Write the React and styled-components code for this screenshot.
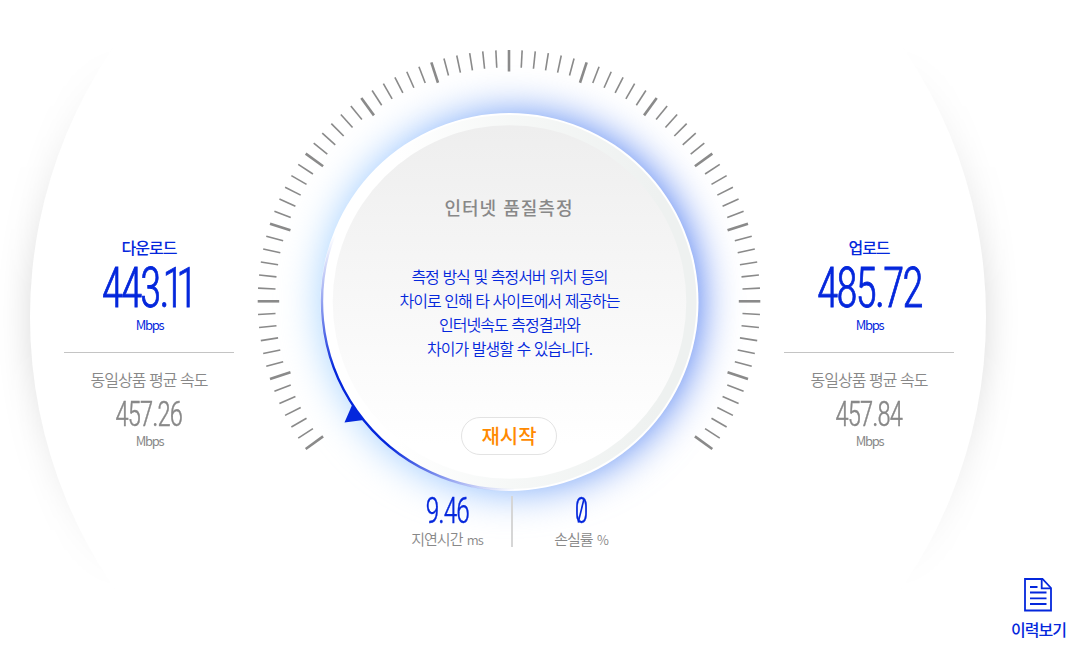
import React from 'react';
import styled, { createGlobalStyle } from 'styled-components';

const BLUE = '#0427dc';
const GRAY = '#888';

const Global = createGlobalStyle`
  * { box-sizing: border-box; }
  body {
    margin: 0;
    background: #fff;
    font-family: "Noto Sans CJK KR", sans-serif;
    letter-spacing: -1px;
    word-spacing: 1px;
  }
`;

const Page = styled.div`
  position: relative;
  width: 1084px;
  height: 657px;
  overflow: hidden;
  display: flex;
`;

const Halo = styled.div`
  position: absolute;
  inset: 0;
  overflow: hidden;
  mask-image: linear-gradient(transparent 45px, #000 290px, #000 350px, transparent 590px);

  &::before {
    content: '';
    position: absolute;
    left: 30px;
    top: -161px;
    width: 956px;
    height: 956px;
    border-radius: 50%;
    background: #fff;
    box-shadow: 0 0 34px rgba(0, 0, 0, 0.15);
  }
`;

const Gauge = styled.svg`
  position: absolute;
  inset: 0;
`;

const Board = styled.main`
  position: relative;
  display: grid;
  grid-template-columns: 170px 550px 170px;
  margin-left: 64px;
`;

const SpeedPanel = styled.section`
  display: flex;
  flex-direction: column;
  align-items: center;
  padding-top: 235px;
`;

const Label = styled.div`
  font-size: 16px;
  line-height: 24px;
  font-weight: ${(p) => (p.$strong ? 500 : 350)};
  color: ${(p) => (p.$strong ? BLUE : GRAY)};
`;

const Unit = styled.div`
  padding-left: 1px;
  font-size: 13px;
  line-height: 18px;
  font-weight: 400;
  letter-spacing: -1.3px;
  color: ${(p) => p.$color};
`;

const Figure = styled.div`
  height: ${(p) => p.$size}px;
  margin-top: ${(p) => p.$offset || 0}px;
  line-height: ${(p) => p.$size}px;
  font-family: Roboto, sans-serif;
  font-stretch: 75%;
  font-size: ${(p) => p.$size}px;
  font-weight: 300;
  -webkit-text-stroke: ${(p) => p.$stroke}px currentColor;
  letter-spacing: -0.05em;
  color: ${(p) => p.$color};
  transform: scaleX(0.8);
  white-space: nowrap;
`;

const One = styled.span`
  margin-left: -0.12em;
`;

const SlashedZero = styled.span`
  position: relative;

  &::after {
    content: '';
    position: absolute;
    left: 42%;
    top: 22%;
    width: 1.5px;
    height: 58%;
    background: currentColor;
    transform: rotate(17deg);
  }
`;

const SpeedBlock = styled.div`
  display: flex;
  flex-direction: column;
  align-items: center;
  height: ${(p) => p.$height}px;
  width: 100%;
`;

const Rule = styled.hr`
  width: 100%;
  height: 1px;
  margin: 0 0 14px;
  border: 0;
  background: #c4c4c4;
`;

const Center = styled.section`
  display: flex;
  flex-direction: column;
  align-items: center;
  padding-top: 194px;
`;

const Title = styled.h1`
  margin: 0 0 44px;
  font-size: 18px;
  line-height: 26px;
  font-weight: 500;
  letter-spacing: 1px;
  color: ${GRAY};
`;

const Notice = styled.p`
  margin: 0 0 57px;
  padding-left: 1px;
  font-size: 16px;
  line-height: 24px;
  font-weight: 350;
  text-align: center;
  color: ${BLUE};
`;

const Restart = styled.button`
  width: 96px;
  height: 38px;
  padding: 0;
  border: 1px solid #e3e3e3;
  border-radius: 19px;
  background: #fff;
  font: 500 20px/34px "Noto Sans CJK KR", sans-serif;
  letter-spacing: 0;
  color: #ff8a00;
`;

const Metrics = styled.div`
  display: flex;
  height: 51px;
  margin: 41px 0 0 14px;
`;

const Metric = styled.div`
  display: flex;
  flex-direction: column;
  align-items: center;
  width: ${(p) => p.$width}px;

  & + & {
    border-left: 2px solid #d6d6d6;
  }
`;

const MetricLabel = styled.div`
  font-size: 15px;
  line-height: 20px;
  font-weight: 350;
  color: ${GRAY};

  small {
    margin-left: 1px;
    font-size: 13px;
  }
`;

const History = styled.a`
  position: absolute;
  right: 18px;
  bottom: 16px;
  display: flex;
  flex-direction: column;
  align-items: center;
  gap: 5px;

  svg {
    margin-right: 2px;
  }
`;

function Digits({ value, ...style }) {
  return (
    <Figure {...style}>
      {value.split('').map((c, i) => (c === '1' ? <One key={i}>1</One> : c))}
    </Figure>
  );
}

function Speed({ label, value, average }) {
  return (
    <SpeedPanel>
      <SpeedBlock $height={117}>
        <Label $strong>{label}</Label>
        <Digits value={value} $size={55} $offset={2} $stroke={0.8} $color={BLUE} />
        <Unit $color={BLUE}>Mbps</Unit>
      </SpeedBlock>
      <Rule />
      <SpeedBlock $height={90}>
        <Label>동일상품 평균 속도</Label>
        <Digits value={average} $size={35} $offset={6} $stroke={0.4} $color={GRAY} />
        <Unit $color={GRAY}>Mbps</Unit>
      </SpeedBlock>
    </SpeedPanel>
  );
}

const ticks = Array.from({ length: 85 }, (_, i) => ({ angle: -126 + i * 3, major: i % 6 === 0 }));

function Dial() {
  return (
    <Gauge width="1084" height="657" viewBox="0 0 1084 657">
      <defs>
        <linearGradient id="glow" x1="0" x2="1" y1="0.6" y2="0.4">
          <stop offset="0" stopColor="#a8d6ff" />
          <stop offset="0.3" stopColor="#8fc0ff" />
          <stop offset="0.65" stopColor="#5587f2" />
          <stop offset="1" stopColor="#2d61ee" />
        </linearGradient>
        <linearGradient id="ring">
          <stop offset="0.2" stopColor="#fff" />
          <stop offset="0.5" stopColor="#f6f8f7" />
          <stop offset="0.9" stopColor="#eef1f0" />
        </linearGradient>
        <linearGradient id="face" x2="0" y2="1">
          <stop offset="0" stopColor="#eee" />
          <stop offset="0.9" stopColor="#fff" />
        </linearGradient>
        <linearGradient id="arc" gradientUnits="userSpaceOnUse" x1="334" y1="236" x2="514" y2="491">
          <stop offset="0" stopColor={BLUE} stopOpacity="0" />
          <stop offset="0.35" stopColor={BLUE} />
          <stop offset="0.65" stopColor={BLUE} />
          <stop offset="1" stopColor={BLUE} stopOpacity="0" />
        </linearGradient>
        <filter id="soft" x="-30%" y="-30%" width="160%" height="160%" colorInterpolationFilters="sRGB">
          <feGaussianBlur stdDeviation="21" />
        </filter>
      </defs>
      <circle cx="509.5" cy="302" r="188" fill="url(#glow)" filter="url(#soft)" />
      {ticks.map(({ angle, major }) => (
        <line
          key={angle}
          x1="509"
          x2="509"
          y1="50"
          y2={major ? 71.5 : 67.5}
          stroke="#8a8a8a"
          strokeWidth={major ? 2.6 : 1.6}
          transform={`rotate(${angle} 509 301.3)`}
        />
      ))}
      <circle cx="509.5" cy="302" r="189" fill="#fff" />
      <circle cx="509.5" cy="302" r="187" fill="url(#ring)" />
      <circle cx="509.5" cy="302" r="176.8" fill="url(#face)" />
      <path d="M334 236A187.8 187.8 0 0 0 514 489.8" fill="none" stroke="url(#arc)" strokeWidth="2.4" />
      <path d="M352.3 404.5L344.5 422.6L363.5 420Z" fill={BLUE} />
    </Gauge>
  );
}

export default function App() {
  return (
    <Page>
      <Global />
      <Halo />
      <Dial />
      <Board>
        <Speed label="다운로드" value="443.11" average="457.26" />
        <Center>
          <Title>인터넷 품질측정</Title>
          <Notice>
            측정 방식 및 측정서버 위치 등의
            <br />
            차이로 인해 타 사이트에서 제공하는
            <br />
            인터넷속도 측정결과와
            <br />
            차이가 발생할 수 있습니다.
          </Notice>
          <Restart>재시작</Restart>
          <Metrics>
            <Metric $width={128}>
              <Digits value="9.46" $size={36} $offset={-3} $stroke={0.4} $color={BLUE} />
              <MetricLabel>
                지연시간 <small>ms</small>
              </MetricLabel>
            </Metric>
            <Metric $width={138}>
              <Figure $size={36} $offset={-3} $stroke={0.4} $color={BLUE}>
                <SlashedZero>0</SlashedZero>
              </Figure>
              <MetricLabel>
                손실률 <small>%</small>
              </MetricLabel>
            </Metric>
          </Metrics>
        </Center>
        <Speed label="업로드" value="485.72" average="457.84" />
      </Board>
      <History>
        <svg width="28" height="34" viewBox="0 0 28 34" fill="none" stroke={BLUE} strokeWidth="1.8">
          <path d="M1 1H18.5L27 10V32.5H1Z" />
          <path d="M17.7 1V10.3H27M6 9H13.5M6 14.5H22.5M6 20.3H22.5M6 26H22.5" />
        </svg>
        <Label $strong>이력보기</Label>
      </History>
    </Page>
  );
}
